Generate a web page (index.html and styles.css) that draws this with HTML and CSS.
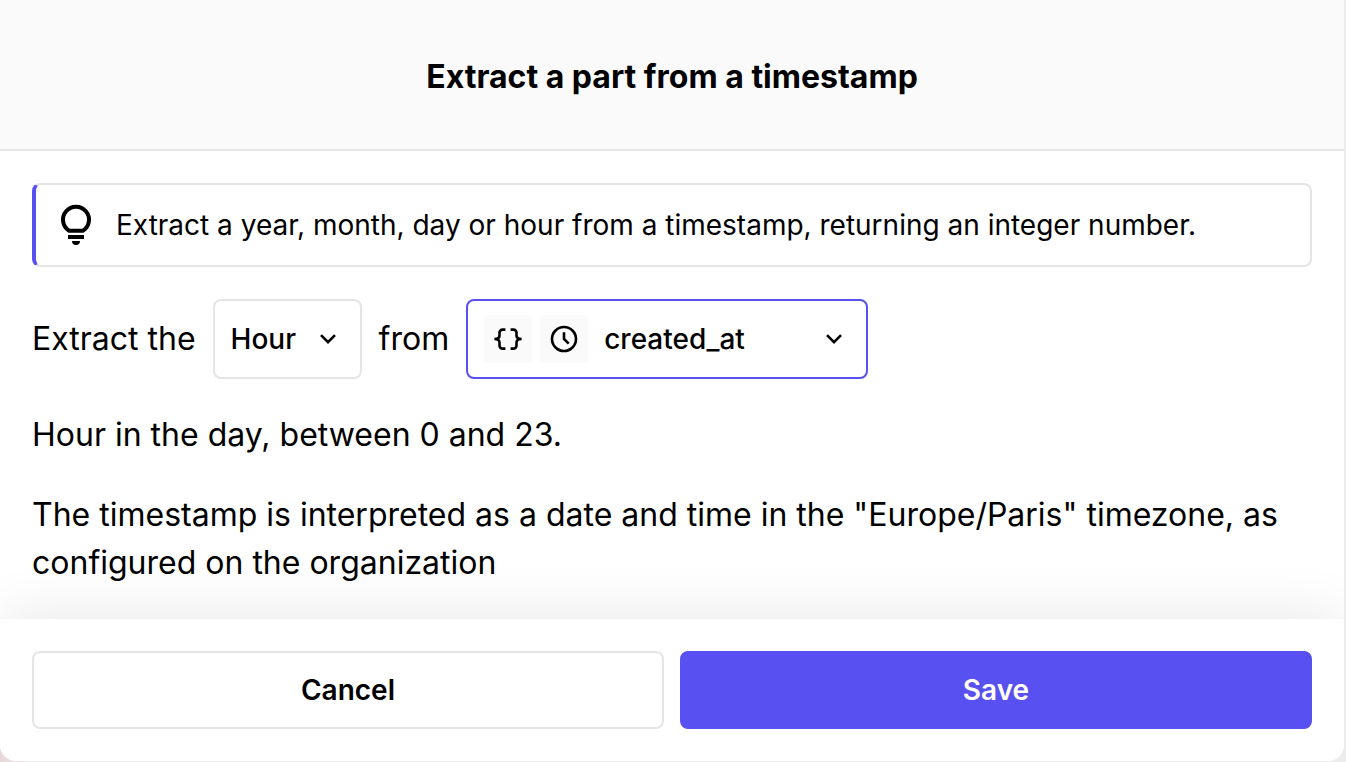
FILE: index.html
```html
<!DOCTYPE html>
<html lang="en">

<head>
  <meta charset="UTF-8">
  <meta name="viewport" content="width=device-width, initial-scale=1.0">
  <title>Extract a part from a timestamp</title>
  <link rel="stylesheet" href="styles.css">
</head>

<body>
  <form class="modal">
    <header class="modal-header">
      <h1 class="modal-title">Extract a part from a timestamp</h1>
    </header>

    <main class="modal-body">
      <!-- Tip -->
      <div class="callout">
        <svg class="callout-icon" width="48" height="48" viewBox="0 0 48 48" aria-hidden="true">
          <path d="M17.1 29.7A13 13 0 1 1 30.9 29.7Z" fill="none" stroke="#000" stroke-width="4" stroke-linejoin="round" />
          <path d="M16 34h16v4H16zM20 40h8a4 4 0 0 1-8 0z" />
        </svg>
        <p>Extract a year, month, day or hour from a timestamp, returning an integer number.</p>
      </div>

      <!-- Part and field to extract -->
      <div class="row">
        <label for="part">Extract the</label>
        <div class="select-box">
          <select class="select select-part" id="part" name="part">
            <option>Year</option>
            <option>Month</option>
            <option>Day</option>
            <option selected>Hour</option>
          </select>
          <svg class="chevron" width="32" height="32" viewBox="0 0 32 32" aria-hidden="true">
            <path d="M9 12.2l7 7 7-7" />
          </svg>
        </div>
        <label for="field">from</label>
        <div class="select-box select-box-active">
          <span class="type-icon">
            <svg width="32" height="32" viewBox="0 0 32 32" aria-hidden="true">
              <path d="M13.4 6.6H10.5a3 3 0 0 0-3 3V12.6Q7.5 16 2.4 16Q7.5 16 7.5 19.4V22.6a3 3 0 0 0 3 3H13.4M18.6 6.6H21.5a3 3 0 0 1 3 3V12.6Q24.5 16 29.6 16Q24.5 16 24.5 19.4V22.6a3 3 0 0 1-3 3H18.6" />
            </svg>
          </span>
          <span class="type-icon">
            <svg width="32" height="32" viewBox="0 0 32 32" aria-hidden="true">
              <circle cx="16" cy="16" r="12" />
              <path d="M16 9.3V16l4.7 4.7" />
            </svg>
          </span>
          <select class="select select-field" id="field" name="field">
            <option>created_at</option>
          </select>
          <svg class="chevron" width="32" height="32" viewBox="0 0 32 32" aria-hidden="true">
            <path d="M9 12.2l7 7 7-7" />
          </svg>
        </div>
      </div>

      <p>Hour in the day, between 0 and 23.</p>
      <p>The timestamp is interpreted as a date and time in the "Europe/Paris" timezone, as configured on the organization</p>
    </main>

    <footer class="modal-footer">
      <button type="button" class="button">Cancel</button>
      <button type="submit" class="button button-primary">Save</button>
    </footer>
  </form>
</body>

</html>
```
FILE: styles.css
```css
* {
  box-sizing: border-box;
}

body {
  margin: 0;
  padding: 0 2px 1px 0;
  background: linear-gradient(to right, #e8d8d8, #ececee 32px);
  color: #000;
  font-family: Inter, sans-serif;
  font-size: 32px;
  line-height: 48px;
}

h1,
p {
  margin: 0;
}

/* Modal */

.modal {
  background-color: #fff;
  border-radius: 0 0 16px 16px;
  overflow: hidden;
}

.modal-header {
  padding: 53px 32px 48px;
  border-bottom: 2px solid #e5e5e5;
  background-color: #fafafa;
  text-align: center;
}

.modal-title {
  font-size: 32px;
  font-weight: 700;
}

.modal-body {
  display: flex;
  flex-direction: column;
  gap: 32px;
  padding: 32px;
}

.modal-footer {
  display: flex;
  gap: 16px;
  padding: 32px;
  background-color: #fff;
  box-shadow: 0 0 60px rgba(0, 0, 0, 0.1);
}

/* Callout */

.callout {
  display: flex;
  align-items: center;
  gap: 16px;
  padding: 16px;
  border: 2px solid #e5e5e5;
  border-left: 4px solid #5850f0;
  border-radius: 8px;
  font-size: 28px;
}

.callout-icon {
  flex: none;
}

/* Selects */

.row {
  display: flex;
  align-items: center;
  gap: 17px;
}

.select-box {
  display: flex;
  align-items: center;
  gap: 8px;
  padding: 14px 16px;
  border: 2px solid #e5e5e5;
  border-radius: 8px;
}

.select-box-active {
  border-color: #5850f0;
}

.select {
  height: 48px;
  padding: 0;
  border: none;
  outline: none;
  appearance: none;
  background: none;
  color: #000;
  font-family: inherit;
  font-size: 28px;
  font-weight: 500;
}

.select-part {
  width: 73px;
}

.select-field {
  width: 206px;
  margin-left: 8px;
}

.type-icon {
  display: flex;
  padding: 8px;
  border-radius: 4px;
  background-color: #fafafa;
}

.type-icon svg,
.chevron {
  flex: none;
  fill: none;
  stroke: #000;
  stroke-width: 2.6;
}

/* Buttons */

.button {
  flex: 1;
  padding: 13px 16px;
  border: 2px solid #e5e5e5;
  border-radius: 8px;
  background-color: #fff;
  color: #000;
  font-family: inherit;
  font-size: 28px;
  font-weight: 600;
  line-height: 48px;
  cursor: pointer;
}

.button-primary {
  border-color: #5850f0;
  background-color: #5850f0;
  color: #fff;
}
```
